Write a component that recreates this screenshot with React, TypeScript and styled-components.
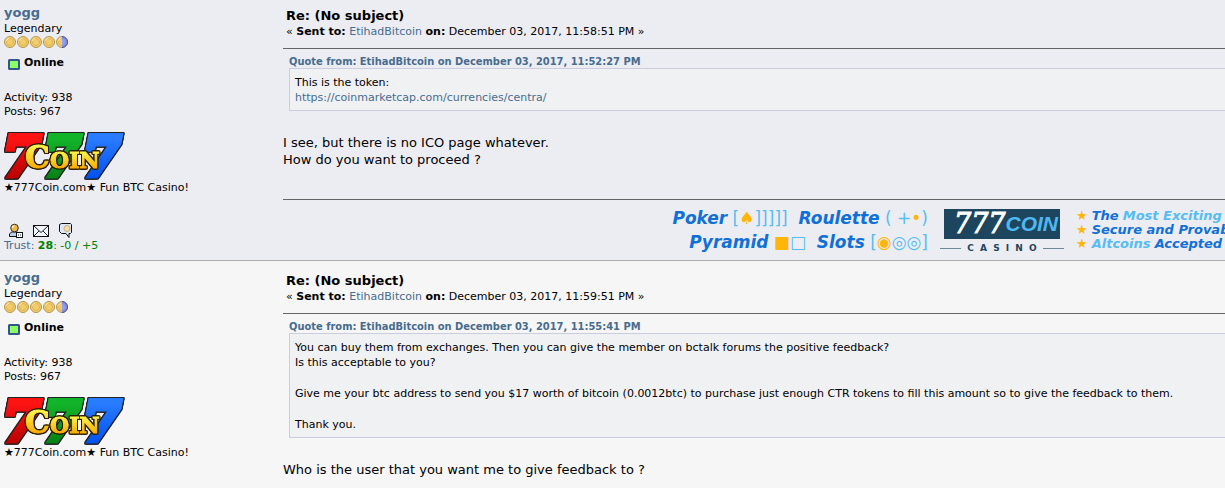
import React from "react";
import styled, { createGlobalStyle } from "styled-components";

const Global = createGlobalStyle`
  html, body { margin: 0; }
  body {
    overflow: hidden;
    color: #000;
    background: #f6f6f6;
    font-family: "DejaVu Sans", Verdana, sans-serif;
    font-size: 13px;
    line-height: 17px;
  }
  * { box-sizing: border-box; }
`;

const Page = styled.main`
  min-height: 100vh;
  overflow: hidden;
`;

const Post = styled.article<{ $alt?: boolean }>`
  display: grid;
  grid-template-columns: 279px minmax(0, 1fr);
  padding: ${(p) => (p.$alt ? 9 : 5)}px 0 3px 4px;
  background: ${(p) => (p.$alt ? "#f6f6f6" : "#ecedf3")};
  border-bottom: 1px solid #adadad;
`;

const Side = styled.aside`
  display: flex;
  flex-direction: column;
  align-items: flex-start;
  font-size: 11px;
  line-height: 14px;
`;

const Link = styled.a`
  color: #476c8e;
  text-decoration: none;
`;

const Name = styled(Link)`
  margin-bottom: 1px;
  font-size: 13px;
  line-height: 16px;
  font-weight: bold;
`;

const Coins = styled.div`
  display: flex;
  gap: 1px;
`;

const Status = styled.div`
  display: flex;
  gap: 4px;
  margin: 8px 0 21px;
  padding-left: 4px;
  font-weight: bold;
  svg { margin-top: 3px; }
`;

const Avatar = styled.div`
  height: 49px;
  margin-top: 13px;
`;

const Tools = styled.div`
  display: flex;
  gap: 9px;
  margin-top: 28px;
  padding-left: 4px;
  a, svg { display: block; }
`;

const Trust = styled.div`
  color: #008000;
`;

const Main = styled.section`
  min-width: 0;
`;

const Head = styled.header`
  padding: 2px 0 8px 3px;
  border-bottom: 1px solid #666;
`;

const Title = styled.h2`
  margin: 0;
  font-size: 13px;
  line-height: 17px;
`;

const Sent = styled.div`
  font-size: 11px;
  line-height: 16px;
`;

const Quote = styled.div`
  margin: 6px 0 23px 6px;
`;

const QuoteFrom = styled(Link)`
  display: block;
  font-family: "DejaVu Sans Condensed", "DejaVu Sans", sans-serif;
  font-size: 11px;
  line-height: 13px;
  font-weight: bold;
`;

const QuoteBox = styled.blockquote`
  margin: 0;
  padding: 6px 5px 5px;
  border: 1px solid #cccce0;
  border-right: 0;
  background: #f0f1f3;
  font-size: 11px;
  line-height: 15px;
  p { margin: 0; }
  p + p { margin-top: 16px; }
`;

const Message = styled.p`
  margin: 0;
`;

const Signature = styled.footer`
  display: flex;
  justify-content: flex-end;
  height: 58px;
  margin-top: 31px;
  border-top: 1px solid #666;
  white-space: nowrap;
`;

const Games = styled.div`
  padding-top: 6px;
  font-size: 17px;
  line-height: 24px;
  text-align: right;
  white-space: pre;
`;

const Tint = styled.span<{ $c: "blue" | "sky" | "gold" }>`
  color: ${(p) => ({ blue: "#1070d8", sky: "#55bdf3", gold: "#ffb608" })[p.$c]};
`;

const Strong = styled(Tint)`
  font-weight: bold;
  font-style: italic;
`;

const Casino = styled.div`
  display: flex;
  flex-direction: column;
  align-items: center;
  margin: 9px 12px 0;
  color: #1d465e;
`;

const Plate = styled.div`
  display: flex;
  align-items: center;
  justify-content: flex-end;
  width: 116px;
  height: 30px;
  padding-right: 2px;
  background: #1d465e;
`;

const Sevens = styled.span`
  color: #fff;
  font: italic 27px/32px "DejaVu Serif", serif;
  -webkit-text-stroke: 1px #fff;
`;

const CoinWord = styled.span`
  color: #4fb8f2;
  font: italic bold 21px/32px "Liberation Sans", Arial, sans-serif;
`;

const Caption = styled.div`
  display: flex;
  align-items: center;
  justify-content: space-between;
  width: 124px;
  padding-top: 1px;
  font-size: 9px;
  line-height: 16px;
  font-weight: bold;
  &::before, &::after {
    content: "";
    width: 21px;
    border-top: 1px solid #6d8796;
  }
`;

const Perks = styled.ul`
  width: 149px;
  margin: 0;
  padding: 9px 0 0;
  overflow: hidden;
  list-style: none;
  font-size: 13px;
  line-height: 14px;
  li { display: flex; gap: 4px; }
`;

const Digit = styled.text`
  font: italic bold 54px "DejaVu Serif", serif;
  stroke-width: 6px;
  stroke-linejoin: miter;
  filter: drop-shadow(1px 0 #222) drop-shadow(-1px 0 #222) drop-shadow(0 1px #222) drop-shadow(0 -1px #222);
`;

const GoldLetters = styled.text<{ $size: number }>`
  font: bold ${(p) => p.$size}px "DejaVu Serif", serif;
  stroke-width: 1px;
  filter: drop-shadow(1px 0 #2a1c00) drop-shadow(-1px 0 #2a1c00) drop-shadow(0 1px #2a1c00) drop-shadow(0 -1px #2a1c00);
`;

const Coin = ({ half }: { half?: boolean }) => (
  <svg width="12" height="12" viewBox="0 0 12 12" aria-hidden="true">
    <circle cx="6" cy="6" r="5.5" fill="#f0cf78" stroke="#b8964c" />
    <circle cx="6" cy="6" r="3.5" fill="#f2cd6c" stroke="#e0b452" />
    <path d="M2.500 5a4 4 0 0 1 3-3" fill="none" stroke="#fbe9b4" />
    {half && (
      <>
        <path d="M6 .5a5.500 5.500 0 0 1 0 11z" fill="#8790e0" />
        <path d="M6 .5a5.500 5.500 0 0 1 0 11" fill="none" stroke="#4a52a8" />
        <path d="M6 3a3 3 0 0 1 0 6z" fill="#98a1ea" />
      </>
    )}
  </svg>
);

const Lamp = () => (
  <svg width="12" height="11" viewBox="0 0 12 11" aria-hidden="true">
    <rect x="1" y="1" width="10" height="9" rx=".5" fill="#8cff68" stroke="#34558b" strokeWidth="2" />
  </svg>
);

const AvatarLogo = ({ id }: { id: string }) => {
  const fades = [
    ["red", "#ff1414", "#b80000"],
    ["green", "#12b52a", "#078014"],
    ["blue", "#2a7cff", "#0050f0"],
    ["gold", "#fff34a", "#f7a800"],
  ];
  const paint = (name: string) => `url(#${id}-${name})`;
  return (
    <svg width="122" height="49" viewBox="0 0 122 49" role="img" aria-label="777 Coin">
      <defs>
        {fades.map(([name, from, to]) => (
          <linearGradient key={name} id={`${id}-${name}`} x1="0" y1="0" x2="0" y2="1">
            <stop offset=".2" stopColor={from} />
            <stop offset=".85" stopColor={to} />
          </linearGradient>
        ))}
      </defs>
      <Digit x="-1" y="44" fill={paint("red")} stroke={paint("red")}>7</Digit>
      <Digit x="39" y="44" fill={paint("green")} stroke={paint("green")}>7</Digit>
      <Digit x="79" y="44" fill={paint("blue")} stroke={paint("blue")}>7</Digit>
      <GoldLetters $size={31} x="21" y="36" fill={paint("gold")} stroke={paint("gold")}>C</GoldLetters>
      <GoldLetters $size={22} x="46" y="36" fill={paint("gold")} stroke={paint("gold")}>OIN</GoldLetters>
    </svg>
  );
};

const ProfileIcon = () => (
  <svg width="16" height="16" viewBox="0 0 16 16" aria-hidden="true">
    <path d="M1.500 13.500V11l2-2h6l2 2v2.500z" fill="#b9d0e6" stroke="#111" />
    <circle cx="6.500" cy="5" r="3.800" fill="#e9b850" stroke="#333" />
    <path d="M4.500 5a2 2 0 0 1 2-2" stroke="#ffe9b0" strokeWidth="1.500" fill="none" />
    <rect x="8.500" y="9.500" width="6" height="5" fill="#fff" stroke="#111" />
    <path d="M10 12h1m1 0h1" stroke="#111" />
  </svg>
);

const MailIcon = () => (
  <svg width="16" height="16" viewBox="0 0 16 16" aria-hidden="true">
    <rect x=".5" y="2.500" width="15" height="11" fill="#f0f6fc" stroke="#111" />
    <path d="M1 3l7 6.500L15 3M1 13l5-5m9 5l-5-5" fill="none" stroke="#222" />
  </svg>
);

const ChatIcon = () => (
  <svg width="16" height="16" viewBox="0 0 16 16" aria-hidden="true">
    <path d="M3.500.5h9l1 1v8l-1 1H11v4l-3-4H3.500l-2-2v-7z" fill="#dce8f4" stroke="#111" />
    <circle cx="9" cy="5.500" r="3" fill="#f7dfa5" stroke="#c5ae80" />
  </svg>
);

const UserPanel = ({ id }: { id: string }) => (
  <Side>
    <Name href="#profile">yogg</Name>
    <span>Legendary</span>
    <Coins>
      <Coin /><Coin /><Coin /><Coin /><Coin half />
    </Coins>
    <Status><Lamp />Online</Status>
    <span>Activity: 938</span>
    <span>Posts: 967</span>
    <Avatar><AvatarLogo id={id} /></Avatar>
    <span>★777Coin.com★ Fun BTC Casino!</span>
    <Tools>
      <a href="#profile" aria-label="View profile"><ProfileIcon /></a>
      <a href="#email" aria-label="Email"><MailIcon /></a>
      <a href="#message" aria-label="Personal message"><ChatIcon /></a>
    </Tools>
    <Trust><Link href="#trust">Trust:</Link> <b>28</b>: -0 / +5</Trust>
  </Side>
);

const SignatureBlock = () => (
  <Signature>
    <Games>
      <div>
        <Strong $c="blue">Poker</Strong> <Tint $c="sky">[<Tint $c="gold">♠</Tint>]]]]]</Tint>{"  "}
        <Strong $c="blue">Roulette</Strong> <Tint $c="sky">( +<Tint $c="gold">•</Tint>)</Tint>
      </div>
      <div>
        <Strong $c="blue">Pyramid</Strong> <Tint $c="gold">■</Tint><Tint $c="sky">□</Tint>{"  "}
        <Strong $c="blue">Slots</Strong> <Tint $c="sky">[<Tint $c="gold">◉</Tint>◎◎]</Tint>
      </div>
    </Games>
    <Casino>
      <Plate><Sevens>777</Sevens><CoinWord>COIN</CoinWord></Plate>
      <Caption><span>C</span><span>A</span><span>S</span><span>I</span><span>N</span><span>O</span></Caption>
    </Casino>
    <Perks>
      <li><Tint $c="gold">★</Tint><span><Strong $c="blue">The</Strong> <Strong $c="sky">Most Exciting</Strong></span></li>
      <li><Tint $c="gold">★</Tint><Strong $c="blue">Secure and Provably</Strong></li>
      <li><Tint $c="gold">★</Tint><span><Strong $c="sky">Altcoins</Strong> <Strong $c="blue">Accepted</Strong></span></li>
    </Perks>
  </Signature>
);

type PostProps = {
  id: string;
  alt?: boolean;
  time: string;
  quoteTime: string;
  quote: React.ReactNode;
  children: React.ReactNode;
};

const MessagePost = ({ id, alt, time, quoteTime, quote, children }: PostProps) => (
  <Post $alt={alt}>
    <UserPanel id={id} />
    <Main>
      <Head>
        <Title>Re: (No subject)</Title>
        <Sent>
          « <b>Sent to:</b> <Link href="#recipient">EtihadBitcoin</Link> <b>on:</b> December 03, 2017, {time} PM »
        </Sent>
      </Head>
      <Quote>
        <QuoteFrom href="#quoted">Quote from: EtihadBitcoin on December 03, 2017, {quoteTime} PM</QuoteFrom>
        <QuoteBox>{quote}</QuoteBox>
      </Quote>
      <Message>{children}</Message>
      <SignatureBlock />
    </Main>
  </Post>
);

export default function App() {
  return (
    <>
      <Global />
      <Page>
        <MessagePost
          id="first"
          time="11:58:51"
          quoteTime="11:52:27"
          quote={
            <p>
              This is the token:<br />
              <Link href="https://coinmarketcap.com/currencies/centra/">https://coinmarketcap.com/currencies/centra/</Link>
            </p>
          }
        >
          I see, but there is no ICO page whatever.<br />
          How do you want to proceed ?
        </MessagePost>
        <MessagePost
          id="second"
          alt
          time="11:59:51"
          quoteTime="11:55:41"
          quote={
            <>
              <p>
                You can buy them from exchanges. Then you can give the member on bctalk forums the positive feedback?<br />
                Is this acceptable to you?
              </p>
              <p>Give me your btc address to send you $17 worth of bitcoin (0.0012btc) to purchase just enough CTR tokens to fill this amount so to give the feedback to them.</p>
              <p>Thank you.</p>
            </>
          }
        >
          Who is the user that you want me to give feedback to ?
        </MessagePost>
      </Page>
    </>
  );
}
